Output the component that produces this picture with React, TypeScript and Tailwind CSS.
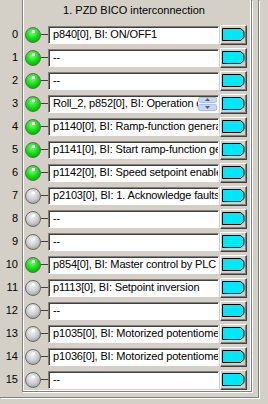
import React from "react";

type Row = { on: boolean; text: string; spin?: boolean };

const rows: Row[] = [
  { on: true, text: "p840[0], BI: ON/OFF1" },
  { on: true, text: "--" },
  { on: true, text: "--" },
  { on: true, text: "Roll_2, p852[0], BI: Operation enable", spin: true },
  { on: true, text: "p1140[0], BI: Ramp-function generator enable" },
  { on: true, text: "p1141[0], BI: Start ramp-function generator" },
  { on: true, text: "p1142[0], BI: Speed setpoint enable" },
  { on: false, text: "p2103[0], BI: 1. Acknowledge faults" },
  { on: false, text: "--" },
  { on: false, text: "--" },
  { on: true, text: "p854[0], BI: Master control by PLC" },
  { on: false, text: "p1113[0], BI: Setpoint inversion" },
  { on: false, text: "--" },
  { on: false, text: "p1035[0], BI: Motorized potentiometer setpoint raise" },
  { on: false, text: "p1036[0], BI: Motorized potentiometer setpoint lower" },
  { on: false, text: "--" },
];

function Led({ on }: { on: boolean }) {
  return (
    <svg width="16" height="16" viewBox="0 0 16 16" className="shrink-0">
      <defs>
        <radialGradient id={on ? "gOn" : "gOff"} cx="0.45" cy="0.35" r="0.7">
          <stop offset="0" stopColor={on ? "#7dff7d" : "#f4f4f4"} />
          <stop offset="0.55" stopColor={on ? "#10e010" : "#cfcfcf"} />
          <stop offset="1" stopColor={on ? "#00a800" : "#9a9a9a"} />
        </radialGradient>
      </defs>
      <circle cx="8" cy="8" r="7.5" fill={`url(#${on ? "gOn" : "gOff"})`} stroke="#6a6a6a" strokeWidth="1" />
      <rect x="7" y="3" width="3" height="3" fill="#ffffff" />
    </svg>
  );
}

function Spinner() {
  return (
    <div className="flex flex-col w-[19px] h-[14px] gap-px shrink-0 mr-px">
      <div className="flex-1 rounded-[2px] bg-[#c6d8f4] border border-[#a9c0e8] flex items-center justify-center">
        <svg width="5" height="3" viewBox="0 0 5 3"><path d="M0 3 L2.5 0 L5 3 Z" fill="#4d6185" /></svg>
      </div>
      <div className="flex-1 rounded-[2px] bg-[#c6d8f4] border border-[#a9c0e8] flex items-center justify-center">
        <svg width="5" height="3" viewBox="0 0 5 3"><path d="M0 0 L2.5 3 L5 0 Z" fill="#4d6185" /></svg>
      </div>
    </div>
  );
}

function CyanButton() {
  return (
    <div className="w-[27px] h-[20px] shrink-0 bg-[#d4d0c8] border border-t-white border-l-white border-r-[#404040] border-b-[#404040] shadow-[inset_-1px_-1px_0_#808080] flex items-center justify-center">
      <svg width="23" height="13" viewBox="0 0 23 13">
        <path d="M0.5 0.5 H18.5 L22 3.5 V9.5 L18.5 12.5 H0.5 Z" fill="#00e8f8" stroke="#000" strokeWidth="1" />
      </svg>
    </div>
  );
}

export default function App() {
  return (
    <div
      className="w-[268px] h-[404px] bg-[#d4d0c8] overflow-hidden text-[11px] text-black"
      style={{ fontFamily: '"Liberation Sans", Arial, sans-serif' }}
    >
      <div className="w-[259px] h-[398px] border-r border-b border-r-[#808080] border-b-[#808080] shadow-[1px_1px_0_#ffffff] pl-[22px] pr-[6px] pb-[5px] flex flex-col">
        <div className="flex-1 flex flex-col border-l border-r border-b border-l-[#808080] border-r-[#808080] border-b-[#808080] shadow-[inset_1px_0_0_#ffffff,inset_-1px_-1px_0_#ffffff,1px_1px_0_#ffffff]">
          <div className="h-[23px] flex items-center justify-center pr-[6px] pb-[3px]">
            1. PZD BICO interconnection
          </div>
          {rows.map((r, i) => (
            <div key={i} className="h-[23px] flex items-center">
              <div className="-ml-[22px] w-[19px] text-right pr-[2px] shrink-0">{i}</div>
              <div className="w-[5px] shrink-0" />
              <Led on={r.on} />
              <div className="w-[7px] h-px bg-[#404040] shrink-0" />
              <div className="w-[171px] h-[18px] shrink-0 bg-white border border-t-[#808080] border-l-[#808080] border-b-white border-r-white shadow-[inset_1px_1px_0_#404040] flex items-center overflow-hidden">
                <div className="flex-1 pl-[4px] whitespace-nowrap overflow-hidden tracking-[-0.15px]">{r.text}</div>
                {r.spin && <Spinner />}
              </div>
              <div className="w-px shrink-0" />
              <CyanButton />
            </div>
          ))}
        </div>
      </div>
    </div>
  );
}
